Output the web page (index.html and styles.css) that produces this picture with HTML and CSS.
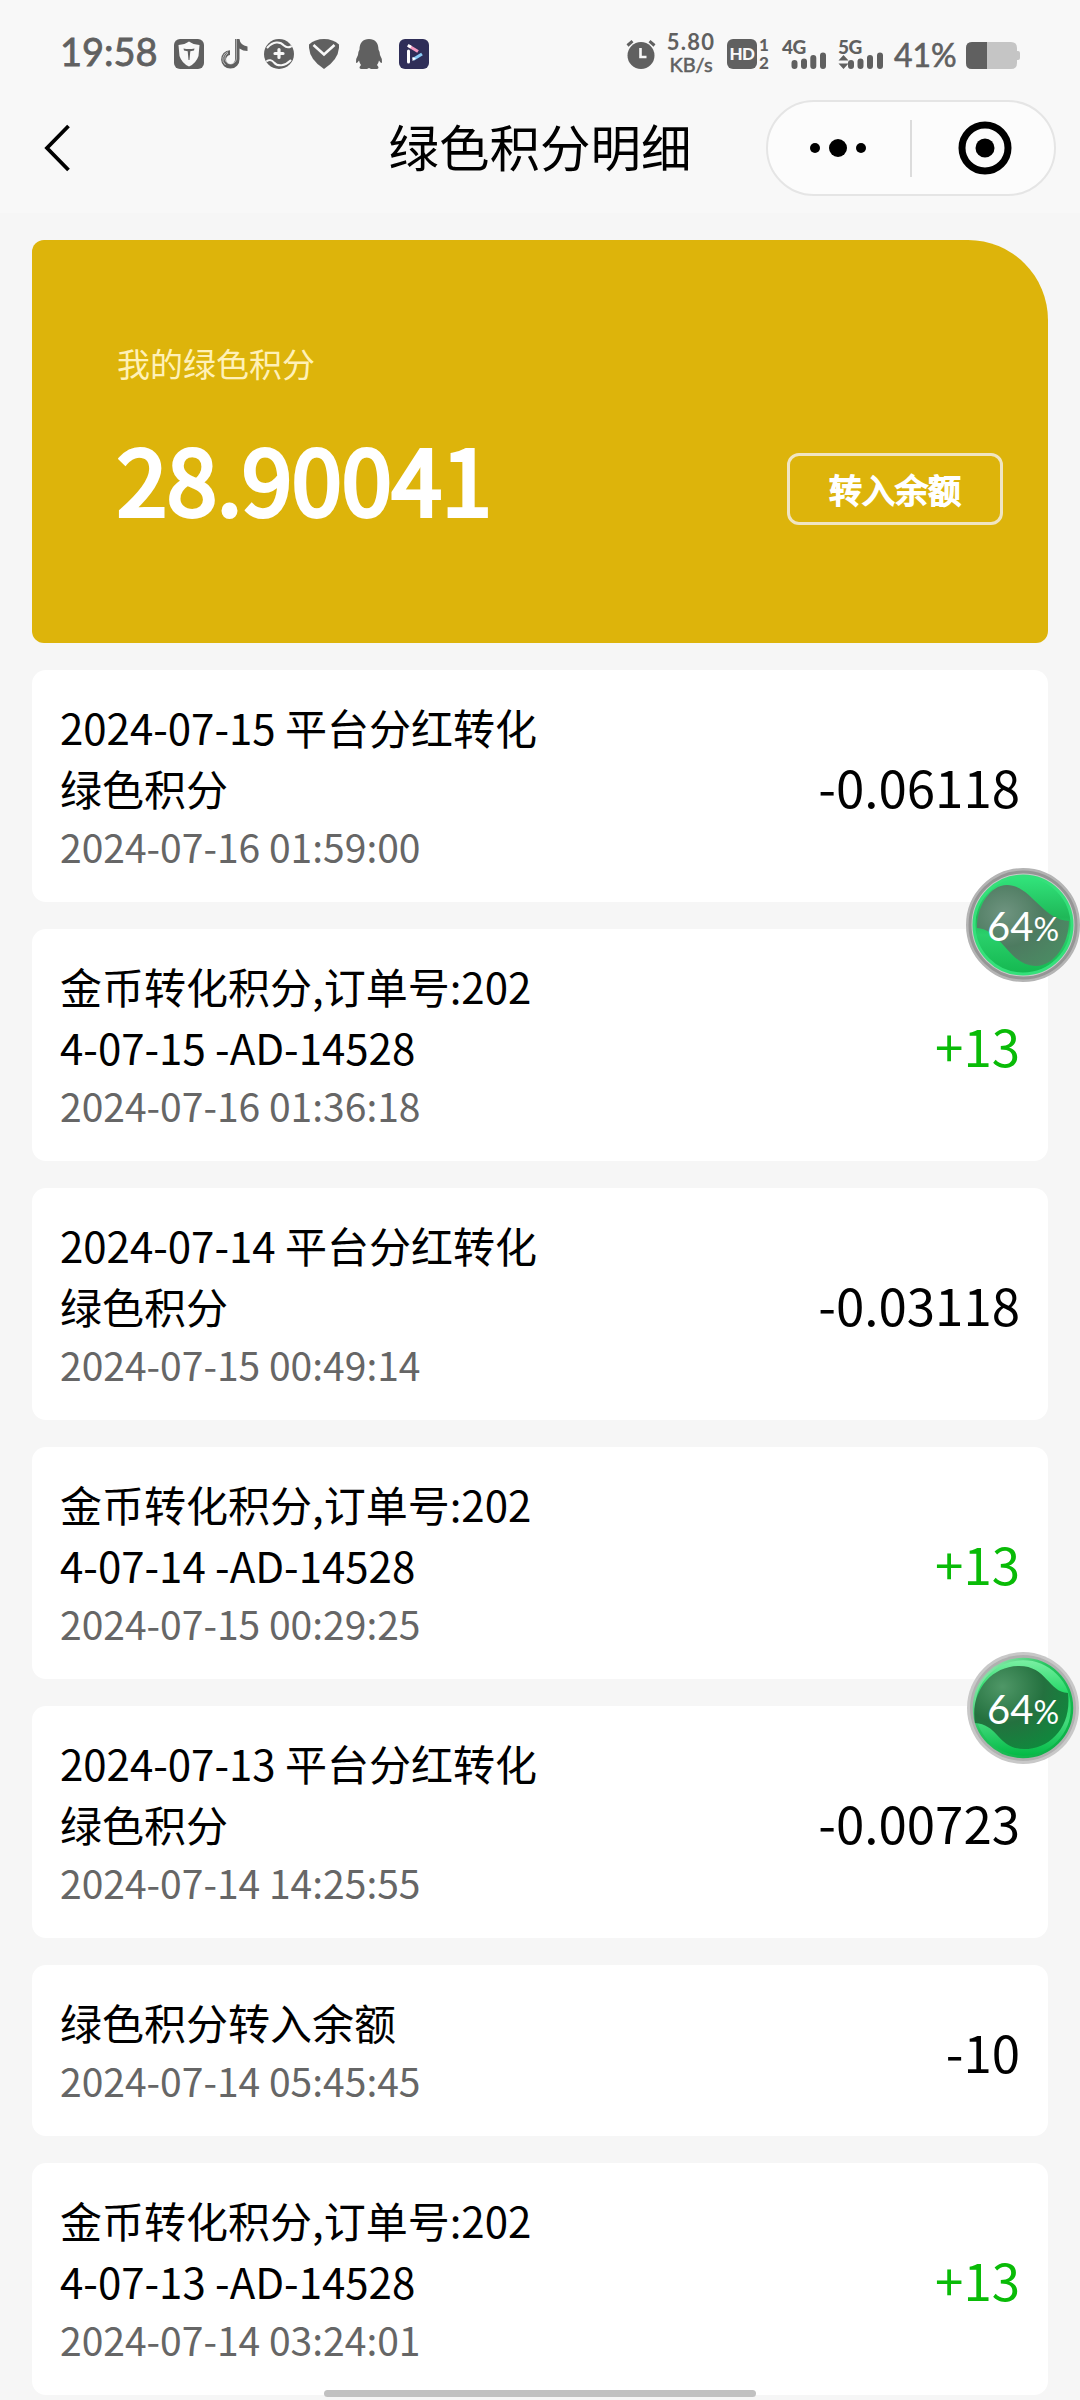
FILE: index.html
```html
<!DOCTYPE html>
<html lang="zh-CN">
<head>
<meta charset="utf-8">
<title>绿色积分明细</title>
<link rel="stylesheet" href="styles.css">
</head>
<body>
<div class="screen">
  <header class="top">
    <div class="status">
      <div class="status-left">
        <span class="clock">19:58</span>
        <svg class="app-icon" viewBox="0 0 30 30"><rect width="30" height="30" rx="6"/><path fill="#f8f8f8" d="M15 2.500Q19 5.500 25.500 6L24.500 17Q22 24.500 15 27.500Q8 24.500 5.500 17L4.500 6Q11 5.500 15 2.500Z"/><path d="M9.500 9.500Q15 10.500 20.500 9.500L20 11.500L16.300 12.300L15.500 21H14.500L13.700 12.300L10 11.500Z"/></svg>
        <svg class="app-icon" viewBox="0 0 30 30"><path d="M16 0H20.500Q21 6 28.500 7.500V12Q24 12 20.500 9.500V20A9.200 9.200 0 1 1 11 11.200V16A4.500 4.500 0 1 0 16 20Z"/><path fill="none" stroke="#f8f8f8" stroke-width=".6" d="M17.300 0V20A5.700 5.700 0 1 1 9 14.200M9 12.800A7.700 7.700 0 0 0 6.500 26"/></svg>
        <svg class="app-icon" viewBox="0 0 30 30"><circle cx="15" cy="15" r="15"/><path fill="none" stroke="#f8f8f8" stroke-width="2" stroke-linecap="round" d="M3.500 8.500C9 2.500 16 2 20 6.500C22 8.500 25 8.500 27 7.500M3 22C5 20.500 8 21 10 23.500C14 28 21 27 26.500 21.500"/><path stroke="#f8f8f8" stroke-width="3.200" stroke-linecap="round" d="M15 10.500V18.500M11 14.500H19"/></svg>
        <svg class="app-icon" viewBox="0 0 30 30"><path d="M15 0Q24 0 30 5.500Q31 20 15 30Q-1 20 0 5.500Q6 0 15 0Z"/><path fill="none" stroke="#f8f8f8" stroke-width="2.600" d="M4.500 6L15 15.500L25.500 6"/></svg>
        <svg class="app-icon" viewBox="0 0 30 30"><path d="M15 0C21 0 24.500 4 24.500 10.500Q26 13 26 16Q28.500 20 28 23.500Q27 25 25 21.500Q24.500 24 23 26Q26 29 23 30H17L15 29L13 30H7Q4 29 7 26Q5.500 24 5 21.500Q3 25 2 23.500Q1.500 20 4 16Q4 13 5.500 10.500C5.500 4 9 0 15 0Z"/></svg>
        <svg class="app-icon" viewBox="0 0 30 30"><rect width="30" height="30" rx="6" fill="#2f2e58"/><path d="M9.500 12V23" stroke="#fff" stroke-width="3" stroke-linecap="round"/><path d="M10 7L19 12.500" stroke="#f49ac1" stroke-width="3"/><path d="M14 20.500L23 15" stroke="#8acbf5" stroke-width="3.200"/><path d="M8.800 6.300L12 8.200" stroke="#fff" stroke-width="3"/><path d="M13.500 18L17 19.500L13.500 22Z" fill="#fff"/></svg>
      </div>
      <div class="status-right">
        <svg class="alarm" viewBox="0 0 30 30"><circle cx="15" cy="16.500" r="13.500"/><path stroke="#606060" stroke-width="3" d="M1.500 6.500L6.500 2.200M23.500 2.200L28.500 6.500"/><path fill="none" stroke="#f8f8f8" stroke-width="2.600" d="M14.500 9V18H20.500"/></svg>
        <div class="speed"><span class="speed-value">5.80</span><span class="speed-unit">KB/s</span></div>
        <div class="hd"><span class="hd-badge">HD</span><span class="sims"><span>1</span><span>2</span></span></div>
        <div class="signal"><span class="net">4G</span><svg viewBox="0 0 44 30"><g class="bars"><path d="M12.500 24V27M22 22.500V27M31.300 19V27M41 16.500V27"/></g></svg></div>
        <div class="signal signal-5g"><span class="net">5G</span><svg viewBox="0 0 46 30"><path d="M.5 21.500L5.500 16L10.500 21.500ZM.5 24.500L5.500 30L10.500 24.500Z"/><g class="bars"><path d="M13 24V27M22.500 22.500V27M32 19V27M42 16.500V27"/></g></svg></div>
        <span class="percent">41%</span>
        <svg class="battery" viewBox="0 0 54 27"><path fill="#c5c5c5" d="M6 0H45Q51 0 51 6V9H52Q54 9 54 11V16Q54 18 52 18H51V21Q51 27 45 27H6Q0 27 0 21V6Q0 0 6 0Z"/><path d="M6 0H21V27H6Q0 27 0 21V6Q0 0 6 0Z"/></svg>
      </div>
    </div>
    <nav class="navbar">
      <svg class="back" viewBox="0 0 30 50"><path d="M25.500 3L4 25L25.500 47"/></svg>
      <h1 class="title">绿色积分明细</h1>
      <div class="capsule">
        <svg class="more" viewBox="0 0 60 60"><circle cx="7" cy="30" r="5"/><circle cx="30" cy="30" r="9"/><circle cx="53" cy="30" r="5"/></svg>
        <span class="divider"></span>
        <svg class="close" viewBox="0 0 60 60"><circle cx="30" cy="30" r="23" fill="none" stroke="#000" stroke-width="7"/><circle cx="30" cy="30" r="9.500"/></svg>
      </div>
    </nav>
  </header>

  <main class="content">
    <section class="balance">
      <div class="balance-label">我的绿色积分</div>
      <div class="balance-row">
        <div class="balance-value">28.90041</div>
        <button class="transfer">转入余额</button>
      </div>
    </section>

    <article class="item"><div><p class="name">2024-07-15 平台分红转化<br>绿色积分</p><p class="date">2024-07-16 01:59:00</p></div><span class="amount">-0.06118</span></article>
    <article class="item"><div><p class="name">金币转化积分,订单号:202<br>4-07-15 -AD-14528</p><p class="date">2024-07-16 01:36:18</p></div><span class="amount plus">+13</span></article>
    <article class="item"><div><p class="name">2024-07-14 平台分红转化<br>绿色积分</p><p class="date">2024-07-15 00:49:14</p></div><span class="amount">-0.03118</span></article>
    <article class="item"><div><p class="name">金币转化积分,订单号:202<br>4-07-14 -AD-14528</p><p class="date">2024-07-15 00:29:25</p></div><span class="amount plus">+13</span></article>
    <article class="item"><div><p class="name">2024-07-13 平台分红转化<br>绿色积分</p><p class="date">2024-07-14 14:25:55</p></div><span class="amount">-0.00723</span></article>
    <article class="item"><div><p class="name">绿色积分转入余额</p><p class="date">2024-07-14 05:45:45</p></div><span class="amount">-10</span></article>
    <article class="item"><div><p class="name">金币转化积分,订单号:202<br>4-07-13 -AD-14528</p><p class="date">2024-07-14 03:24:01</p></div><span class="amount plus">+13</span></article>
  </main>

  <svg class="ball ball-first" viewBox="0 0 114 114">
    <defs>
      <linearGradient id="g1" x1="0" y1="0" x2="0" y2="1"><stop offset="0" stop-color="#32e57c"/><stop offset=".42" stop-color="#1fb858"/><stop offset=".6" stop-color="#2ad06b"/><stop offset="1" stop-color="#14b850"/></linearGradient>
      <radialGradient id="w1" cx=".3" cy=".35" r=".75"><stop offset="0" stop-color="#6f9480"/><stop offset=".55" stop-color="#4d7b60"/><stop offset="1" stop-color="#4b8a63"/></radialGradient>
    </defs>
    <circle cx="57" cy="57" r="54.500" fill="#c9c9c9" stroke="#b4b4b4" stroke-width="5"/>
    <circle cx="57" cy="57" r="53" fill="none" stroke="#959595" stroke-width="3"/>
    <circle cx="57" cy="57" r="49" fill="url(#g1)" stroke="#35e07a" stroke-width="3"/>
    <path fill="url(#w1)" d="M11 60C11 38 24 17 41 17C65 17 75 51 103 53C103 76 88 98 70 98C43 98 36 62 11 60Z"/>
    <text class="ball-num" x="21" y="73">64</text><text class="ball-pct" x="67.500" y="73">%</text>
  </svg>
  <svg class="ball ball-second" viewBox="0 0 114 114">
    <defs>
      <linearGradient id="g2" x1="0" y1="0" x2="0" y2="1"><stop offset="0" stop-color="#7df0a5"/><stop offset=".35" stop-color="#25d967"/><stop offset=".65" stop-color="#42d97b"/><stop offset="1" stop-color="#00b944"/></linearGradient>
      <radialGradient id="w2" cx=".3" cy=".25" r=".8"><stop offset="0" stop-color="#4f9767"/><stop offset=".55" stop-color="#24713f"/><stop offset="1" stop-color="#11873d"/></radialGradient>
      <linearGradient id="s2" x1="0" y1="0" x2="1" y2="1"><stop offset="0" stop-color="#b4f5ca"/><stop offset=".4" stop-color="#25c45e"/><stop offset="1" stop-color="#06ad42"/></linearGradient>
    </defs>
    <circle cx="57" cy="57" r="56" fill="#c8c8c8"/>
    <circle cx="57" cy="57" r="53" fill="#b0b0b0"/>
    <circle cx="57" cy="57" r="49" fill="url(#g2)" stroke="url(#s2)" stroke-width="2.500"/>
    <path fill="url(#w2)" d="M9 72C4 42 24 15 53 15C81 15 82 41 102 42C106 76 84 98 58 98C32 98 32 73 9 72Z"/>
    <text class="ball-num" x="21" y="73">64</text><text class="ball-pct" x="67.500" y="73">%</text>
  </svg>
  <div class="home-bar"></div>
</div>
</body>
</html>
```
FILE: styles.css
```css
* { box-sizing: border-box; }
body {
  margin: 0;
  background: #f6f6f6;
  color: #000;
  font-family: "Noto Sans CJK SC", sans-serif;
}
p, h1 { margin: 0; font-weight: 400; }
.screen {
  position: relative;
  width: 1080px;
  height: 2400px;
  overflow: hidden;
}

.top { height: 213px; background: #f8f8f8; }
.status {
  display: flex;
  justify-content: space-between;
  height: 100px;
  padding: 0 60px 0 60px;
  color: #606060;
  fill: #606060;
  font-family: Lato, sans-serif;
}
.status-left { display: flex; gap: 15px; padding-top: 39px; }
.clock {
  width: 99px;
  margin-top: -8px;
  font-size: 38px;
  line-height: 40px;
  -webkit-text-stroke: 0.8px #606060;
}
.app-icon { width: 30px; height: 30px; }
.status-right { display: flex; padding-top: 39px; }
.alarm { width: 30px; height: 30px; }
.speed {
  display: flex;
  flex-direction: column;
  align-items: center;
  width: 50px;
  margin: -8px 11px 0 10px;
  font-weight: 700;
  line-height: 22px;
}
.speed-value { font-size: 22px; letter-spacing: 1.2px; }
.speed-unit { font-size: 20px; font-weight: 400; -webkit-text-stroke: 0.5px #606060; }
.hd { display: flex; width: 43px; margin-right: 12px; gap: 2px; }
.hd-badge {
  width: 30px;
  height: 30px;
  border-radius: 6px;
  background: #606060;
  color: #f8f8f8;
  font-size: 17px;
  font-weight: 900;
  line-height: 30px;
  text-align: center;
  letter-spacing: -0.5px;
}
.sims {
  display: flex;
  flex-direction: column;
  align-items: center;
  margin-top: -3px;
  font-size: 17px;
  font-weight: 900;
  line-height: 18px;
}
.signal { position: relative; width: 44px; height: 30px; margin-right: 12px; }
.signal-5g { width: 46px; margin-right: 10px; }
.signal svg { display: block; width: 100%; height: 30px; }
.bars { stroke: #606060; stroke-width: 6; stroke-linecap: round; }
.net {
  position: absolute;
  left: 0;
  top: -2px;
  font-size: 19px;
  font-weight: 900;
  line-height: 19px;
  letter-spacing: -0.5px;
}
.percent {
  width: 72px;
  margin-top: -2px;
  font-size: 32px;
  line-height: 36px;
  -webkit-text-stroke: 0.6px #606060;
}
.battery { width: 54px; height: 27px; margin-top: 3px; }

.navbar {
  display: grid;
  grid-template-columns: 314px 452px 290px;
  align-items: center;
  height: 96px;
}
.back {
  width: 30px;
  height: 50px;
  margin-left: 43px;
  fill: none;
  stroke: #000;
  stroke-width: 3.8;
}
.title { padding-bottom: 6px; font-size: 50.5px; line-height: 74px; text-align: center; }
.capsule {
  display: flex;
  align-items: center;
  height: 96px;
  padding: 0 39px 0 40px;
  border: 2px solid #e5e5e5;
  border-radius: 48px;
  background: #fcfcfc;
}
.more, .close { width: 60px; height: 60px; }
.divider { width: 2px; height: 57px; margin: 0 43px 0 42px; background: #dcdcdc; }

.content {
  display: flex;
  flex-direction: column;
  gap: 27px;
  padding: 27px 32px 0;
}
.balance {
  height: 403px;
  padding: 98px 45px 0 85px;
  border-radius: 12px 80px 12px 12px;
  background: #ddb40b;
  color: #fff;
}
.balance-label { font-size: 33px; line-height: 50px; color: #fff1b8; }
.balance-row {
  display: flex;
  align-items: center;
  justify-content: space-between;
  height: 120px;
  margin-top: 41px;
}
.balance-value {
  padding-bottom: 24px;
  font-size: 90px;
  line-height: 120px;
  -webkit-text-stroke: 4px #fff;
}
.transfer {
  width: 216px;
  height: 72px;
  padding: 0;
  border: 3px solid #f0e5c3;
  border-radius: 12px;
  background: none;
  color: #fff;
  font: 400 33px/64px "Noto Sans CJK SC", sans-serif;
  -webkit-text-stroke: 1.8px #fff;
}

.item {
  display: flex;
  align-items: center;
  justify-content: space-between;
  padding: 26px 28px 28px;
  border-radius: 14px;
  background: #fff;
}
.name { font-size: 42px; line-height: 61px; }
.date { font-size: 39px; line-height: 56px; color: #666; }
.amount { padding-top: 2px; font-size: 51px; line-height: 74px; }
.plus { color: #09bb07; }

.ball { position: absolute; left: 966px; width: 114px; height: 114px; }
.ball-first { top: 868px; }
.ball-second { top: 1651px; }
.ball-num { fill: #fff; font: 40px Lato, sans-serif; }
.ball-pct { fill: #fff; font: 32px Lato, sans-serif; }
.home-bar {
  position: absolute;
  left: 324px;
  top: 2390px;
  width: 432px;
  height: 7px;
  border-radius: 4px;
  background: #c1c1c1;
}
```
